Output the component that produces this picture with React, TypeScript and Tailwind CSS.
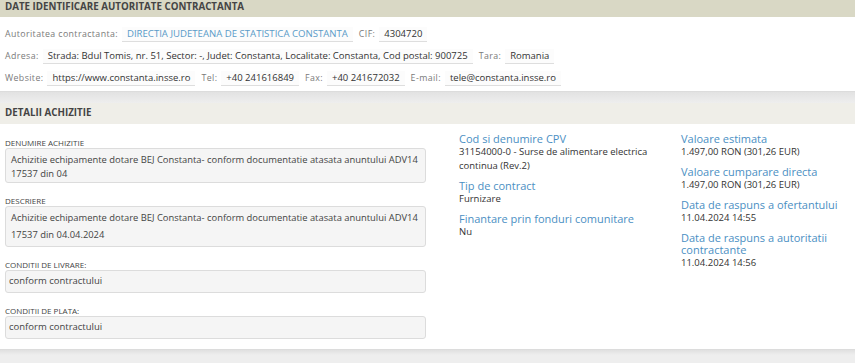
import React from "react";

const Label = ({ children, first }: { children: React.ReactNode; first?: boolean }) => (
  <span className={`text-[8.8px] tracking-[0.4px] text-[#7a7a7a] ${first ? "" : "ml-[6px]"} mr-[4px]`}>{children}</span>
);

const Val = ({ children, blue }: { children: React.ReactNode; blue?: boolean }) => (
  <span
    className={`h-[15px] leading-[14px] px-[5px] border-b border-[#dedede] bg-[#fcfcfc] ${
      blue ? "text-[9.6px] text-[#5a9bc8]" : "text-[9.5px] text-[#333]"
    }`}
  >
    {children}
  </span>
);

const FieldBox = ({
  label,
  children,
  cls,
}: {
  label: string;
  children: React.ReactNode;
  cls: string;
}) => (
  <div className="flex flex-col">
    <div className="h-[11px] leading-[11px] text-[8px] text-[#444] uppercase">{label}</div>
    <div
      className={`border border-[#dcdcdc] bg-[#f5f5f5] rounded-[3px] text-[#444] ${cls}`}
    >
      {children}
    </div>
  </div>
);

const Info = ({ title, children }: { title: string; children: React.ReactNode }) => (
  <div className="flex flex-col mb-[7px]">
    <div className="text-[11px] leading-[12px] text-[#4b8fc3]">{title}</div>
    <div className="text-[9.5px] leading-[14px] text-[#333]">{children}</div>
  </div>
);

export default function App() {
  return (
    <div
      className="w-[855px] h-[363px] overflow-hidden bg-[#ebebeb] flex flex-col"
      style={{ fontFamily: "'Open Sans', 'Liberation Sans', sans-serif" }}
    >
      {/* Section 1 header */}
      <div className="h-[17px] shrink-0 bg-[#d9d8c5] px-[5px] flex items-center pb-[2px]">
        <span className="text-[9.75px] font-bold text-[#444]">DATE IDENTIFICARE AUTORITATE CONTRACTANTA</span>
      </div>
      {/* Section 1 body */}
      <div className="h-[75px] shrink-0 bg-white px-[5px] pt-[10px] flex flex-col gap-[7px] border-b border-[#dcdcdc]">
        <div className="flex items-center h-[15px]">
          <Label first>Autoritatea contractanta:</Label>
          <Val blue>DIRECTIA JUDETEANA DE STATISTICA CONSTANTA</Val>
          <Label>CIF:</Label>
          <Val>4304720</Val>
        </div>
        <div className="flex items-center h-[15px]">
          <Label first>Adresa:</Label>
          <Val>
            Strada: Bdul Tomis, nr. 51, Sector: -, Judet: Constanta, Localitate: Constanta, Cod postal: 900725
          </Val>
          <Label>Tara:</Label>
          <Val>Romania</Val>
        </div>
        <div className="flex items-center h-[15px]">
          <Label first>Website:</Label>
          <Val>https://www.constanta.insse.ro</Val>
          <Label>Tel:</Label>
          <Val>+40 241616849</Val>
          <Label>Fax:</Label>
          <Val>+40 241672032</Val>
          <Label>E-mail:</Label>
          <Val>tele@constanta.insse.ro</Val>
        </div>
      </div>
      {/* gap */}
      <div className="h-[11px] shrink-0 bg-gradient-to-b from-[#e2e2e2] to-[#eeeeee]" />
      {/* Section 2 header */}
      <div className="h-[21px] shrink-0 bg-[#efeee8] px-[5px] flex items-center">
        <span className="text-[9.75px] font-bold text-[#444]">DETALII ACHIZITIE</span>
      </div>
      {/* Section 2 body */}
      <div className="h-[226px] shrink-0 bg-white flex px-[5px] border-b border-[#dcdcdc]">
        <div className="w-[421px] shrink-0 pt-[13px] flex flex-col gap-[12px]">
          <FieldBox label="Denumire achizitie" cls="h-[35px] text-[9.4px] leading-[14px] pt-[4px] pl-[5px]">
            Achizitie echipamente dotare BEJ Constanta- conform documentatie atasata anuntului ADV14 17537 din 04
          </FieldBox>
          <FieldBox label="Descriere" cls="h-[41px] text-[9.4px] leading-[17px] pt-[2px] pl-[5px]">
            Achizitie echipamente dotare BEJ Constanta- conform documentatie atasata anuntului ADV14 17537 din
            04.04.2024
          </FieldBox>
          <FieldBox label="Conditii de livrare:" cls="h-[23px] text-[9.5px] flex items-center px-[3px]">
            conform contractului
          </FieldBox>
          <FieldBox label="Conditii de plata:" cls="h-[23px] text-[9.5px] flex items-center px-[3px]">
            conform contractului
          </FieldBox>
        </div>
        <div className="w-[210px] shrink-0 ml-[33px] pt-[9px] flex flex-col">
          <Info title="Cod si denumire CPV">31154000-0 - Surse de alimentare electrica continua (Rev.2)</Info>
          <Info title="Tip de contract">Furnizare</Info>
          <Info title="Finantare prin fonduri comunitare">Nu</Info>
        </div>
        <div className="w-[170px] shrink-0 ml-[12px] pt-[9px] flex flex-col">
          <Info title="Valoare estimata">1.497,00 RON (301,26 EUR)</Info>
          <Info title="Valoare cumparare directa">1.497,00 RON (301,26 EUR)</Info>
          <Info title="Data de raspuns a ofertantului">11.04.2024 14:55</Info>
          <Info title="Data de raspuns a autoritatii contractante">11.04.2024 14:56</Info>
        </div>
      </div>
      <div className="h-[5px] shrink-0 bg-gradient-to-b from-[#e0e0e0] to-[#eeeeee]" />
      <div className="flex-1 bg-[#eeeeee]" />
    </div>
  );
}
